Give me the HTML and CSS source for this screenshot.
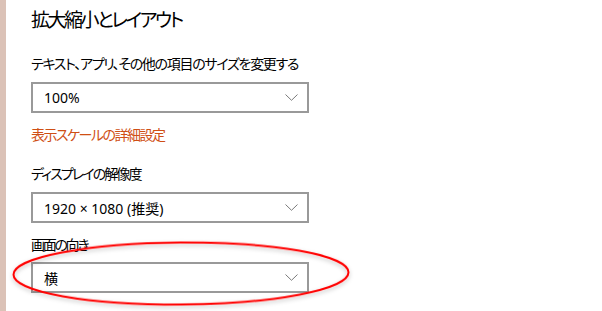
FILE: index.html
```html
<!DOCTYPE html>
<html lang="ja">

<head>
    <meta charset="UTF-8">
    <meta name="viewport" content="width=device-width, initial-scale=1.0">
    <title>拡大縮小とレイアウト</title>
    <link rel="stylesheet" href="styles.css">
</head>

<body>
    <div class="page">
        <div class="strip"></div>
        <div class="content">
            <h1 class="title">拡大縮小とレイアウト</h1>
            <div class="label first">テキスト、アプリ、その他の項目のサイズを変更する</div>
            <div class="select">
                <span>100%</span>
                <svg class="chev" width="13" height="7" viewBox="0 0 13 7"><path d="M0.5 0.5 L6.5 6.3 L12.5 0.5" fill="none" stroke="#7a7a7a" stroke-width="1"/></svg>
            </div>
            <a class="link" href="javascript:;">表示スケールの詳細設定</a>
            <div class="label second">ディスプレイの解像度</div>
            <div class="select">
                <span>1920 × 1080 (推奨)</span>
                <svg class="chev" width="13" height="7" viewBox="0 0 13 7"><path d="M0.5 0.5 L6.5 6.3 L12.5 0.5" fill="none" stroke="#7a7a7a" stroke-width="1"/></svg>
            </div>
            <div class="label third">画面の向き</div>
            <div class="select">
                <span>横</span>
                <svg class="chev" width="13" height="7" viewBox="0 0 13 7"><path d="M0.5 0.5 L6.5 6.3 L12.5 0.5" fill="none" stroke="#7a7a7a" stroke-width="1"/></svg>
            </div>
        </div>
    </div>
    <!-- 赤い丸の注釈 -->
    <svg class="mark" width="602" height="311" viewBox="0 0 602 311">
        <defs>
            <filter id="sh" x="-10%" y="-30%" width="120%" height="160%">
                <feDropShadow dx="0" dy="2" stdDeviation="2" flood-color="#000" flood-opacity="0.25"/>
            </filter>
        </defs>
        <ellipse cx="181" cy="273.5" rx="167.5" ry="31" fill="none" stroke="#f00" stroke-width="2" transform="rotate(-0.4 181 273.5)" filter="url(#sh)"/>
    </svg>
</body>

</html>
```

FILE: styles.css
```css
body {
    margin: 0;
    background-color: #fff;
    font-family: "Noto Sans", "Noto Sans CJK JP", sans-serif;
    color: #000;
}

.page {
    display: flex;
    height: 311px;
    overflow: hidden;
}

.strip {
    width: 6px;
    background-color: #dbc2b7;
}

.content {
    padding-left: 25px;
    display: flex;
    flex-direction: column;
    align-items: flex-start;
}

.title {
    margin: 6px 0 0;
    font-size: 19px;
    font-weight: normal;
    line-height: 28px;
    letter-spacing: -2.5px;
    font-feature-settings: "palt";
}

.label {
    font-size: 14px;
    line-height: 20px;
    letter-spacing: -1.9px;
    font-feature-settings: "palt";
}

.first {
    margin-top: 20px;
    letter-spacing: -1.3px;
}

.second {
    margin-top: 19px;
}

.third {
    margin-top: 12px;
    letter-spacing: -2.3px;
}

.select {
    box-sizing: border-box;
    display: flex;
    align-items: center;
    justify-content: space-between;
    width: 278px;
    height: 31px;
    margin-top: 8px;
    padding: 0 9px 0 11px;
    border: 2px solid #999;
    font-size: 14px;
}

.third + .select {
    margin-top: 7px;
}

.chev {
    display: block;
}

.link {
    margin-top: 12px;
    font-size: 14px;
    line-height: 20px;
    letter-spacing: -1.5px;
    color: #cf4f14;
    text-decoration: none;
    font-feature-settings: "palt";
}

.mark {
    position: absolute;
    left: 0;
    top: 0;
    pointer-events: none;
}
```
